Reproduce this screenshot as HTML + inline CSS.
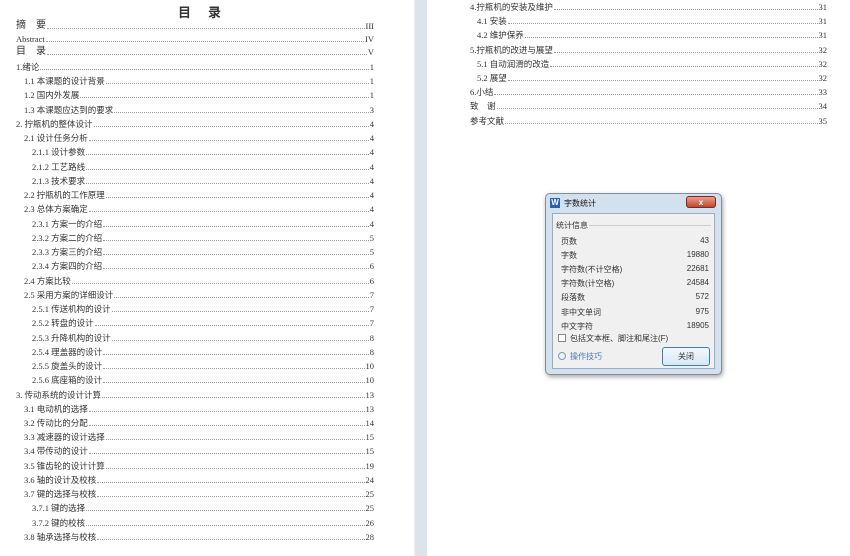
<!DOCTYPE html>
<html><head><meta charset="utf-8">
<style>
*{margin:0;padding:0;box-sizing:border-box}
body{width:850px;height:556px;overflow:hidden;background:#fff;position:relative;font-family:"Liberation Serif","Noto Sans CJK SC",serif;color:#333}
.gut{position:absolute;left:414px;top:0;width:13px;height:556px;background:#dde3ea;border-left:1px solid #eef0f2}
.r{position:absolute;display:flex;align-items:flex-end;font-size:8.5px;line-height:10px;height:10px;white-space:nowrap}
.r .t{font-family:"Liberation Serif","Noto Sans CJK SC",sans-serif}
.r .d{flex:1;border-bottom:1px dotted #999;margin:0 1px 2px 1px;height:1px}
.title{position:absolute;left:178px;top:2px;font-size:13px;font-weight:bold;font-family:"Noto Sans CJK SC",sans-serif;letter-spacing:7px}
.dlg{position:absolute;left:545px;top:193px;width:177px;height:182px;background:#d3e0ee;border:1px solid #7f8fa0;border-radius:5px;box-shadow:1px 2px 5px rgba(0,0,0,.35);font-family:"Liberation Sans","Noto Sans CJK SC",sans-serif}
.cli{position:absolute;left:6px;top:19px;width:163px;height:156px;background:#f0f0f0;border:1px solid #9aacbf}
.dr{position:absolute;left:8px;width:148px;font-size:8px;display:flex;justify-content:space-between;color:#333}
</style></head><body>
<div class="title">目 录</div>
<div class="gut"></div>
<div id="L"></div>
<div id="R"></div>
<div class="dlg">
 <div style="position:absolute;left:4px;top:4px;width:10px;height:10px;background:#2b5fb8;color:#fff;font-size:8px;font-weight:bold;text-align:center;line-height:10px">W</div>
 <div style="position:absolute;left:18px;top:4px;font-size:8px;color:#111">字数统计</div>
 <div style="position:absolute;left:140px;top:2px;width:30px;height:12px;background:linear-gradient(#e8a090,#c4452c);border:1px solid #7a2a1e;border-radius:3px;color:#fff;font-size:8px;text-align:center;line-height:11px;font-weight:bold">x</div>
 <div class="cli">
  <div style="position:absolute;left:3px;top:6px;font-size:8px;color:#333">统计信息</div>
  <div style="position:absolute;left:36px;top:11px;width:122px;border-top:1px solid #ccc"></div>
  <div class="dr" style="top:22px"><span>页数</span><span>43</span></div>
  <div class="dr" style="top:36px"><span>字数</span><span>19880</span></div>
  <div class="dr" style="top:50px"><span>字符数(不计空格)</span><span>22681</span></div>
  <div class="dr" style="top:64px"><span>字符数(计空格)</span><span>24584</span></div>
  <div class="dr" style="top:78px"><span>段落数</span><span>572</span></div>
  <div class="dr" style="top:93px"><span>非中文单词</span><span>975</span></div>
  <div class="dr" style="top:107px"><span>中文字符</span><span>18905</span></div>
  <div style="position:absolute;left:5px;top:120px;width:8px;height:8px;border:1px solid #888;background:#fff"></div>
  <div style="position:absolute;left:17px;top:119px;font-size:8px">包括文本框、脚注和尾注(F)</div>
  <div style="position:absolute;left:5px;top:138px;width:8px;height:8px;border:1px solid #7a9cc0;border-radius:50%"></div>
  <div style="position:absolute;left:17px;top:137px;font-size:8px;color:#4a7ab8">操作技巧</div>
  <div style="position:absolute;left:109px;top:133px;width:48px;height:19px;border:1px solid #3c7fb1;border-radius:3px;background:linear-gradient(#f2f8fd,#d6e8f6);font-size:8px;text-align:center;line-height:17px">关闭</div>
 </div>
</div>
<script>
var L=[[0,"摘　要","III",27],[0,"Abstract","IV",40],[0,"目　录","V",53],
[0,"1.绪论","1"],[1,"1.1 本课题的设计背景","1"],[1,"1.2 国内外发展","1"],[1,"1.3 本课题应达到的要求","3"],
[0,"2.  拧瓶机的整体设计","4"],[1,"2.1 设计任务分析","4"],[2,"2.1.1 设计参数","4"],[2,"2.1.2 工艺路线","4"],[2,"2.1.3 技术要求","4"],
[1,"2.2 拧瓶机的工作原理","4"],[1,"2.3 总体方案确定","4"],[2,"2.3.1  方案一的介绍","4"],[2,"2.3.2  方案二的介绍","5"],[2,"2.3.3  方案三的介绍","5"],[2,"2.3.4  方案四的介绍","6"],
[1,"2.4  方案比较","6"],[1,"2.5  采用方案的详细设计","7"],[2,"2.5.1  传送机构的设计","7"],[2,"2.5.2 转盘的设计","7"],[2,"2.5.3  升降机构的设计","8"],[2,"2.5.4 理盖器的设计","8"],[2,"2.5.5  旋盖头的设计","10"],[2,"2.5.6  底座箱的设计","10"],
[0,"3.  传动系统的设计计算","13"],[1,"3.1  电动机的选择","13"],[1,"3.2  传动比的分配","14"],[1,"3.3 减速器的设计选择","15"],[1,"3.4 带传动的设计","15"],[1,"3.5 锥齿轮的设计计算","19"],[1,"3.6 轴的设计及校核","24"],[1,"3.7  键的选择与校核","25"],[2,"3.7.1  键的选择","25"],[2,"3.7.2  键的校核","26"],[1,"3.8  轴承选择与校核","28"]];
var h="";
L.forEach(function(e,i){var y=e[3]!==undefined?e[3]:68+(i-3)*14.24;var x=[16,24,32][e[0]];
var fs=(i<3&&i!=1)?"font-size:10px;":"";
h+='<div class="r" style="left:'+x+'px;width:'+(374-x)+'px;top:'+(y-6)+'px"><span class="t" style="'+fs+'">'+e[1]+'</span><span class="d"></span><span>'+e[2]+'</span></div>';});
document.getElementById("L").innerHTML=h;
var R=[[0,"4.拧瓶机的安装及维护","31"],[1,"4.1  安装","31"],[1,"4.2  维护保养","31"],[0,"5.拧瓶机的改进与展望","32"],[1,"5.1  自动润滑的改造","32"],[1,"5.2  展望","32"],[0,"6.小结","33"],[0,"致　谢","34"],[0,"参考文献","35"]];
h="";
R.forEach(function(e,i){var y=8+i*14.2;var x=[470,477][e[0]];
h+='<div class="r" style="left:'+x+'px;width:'+(827-x)+'px;top:'+(y-6)+'px"><span class="t">'+e[1]+'</span><span class="d"></span><span>'+e[2]+'</span></div>';});
document.getElementById("R").innerHTML=h;
</script>
</body></html>
